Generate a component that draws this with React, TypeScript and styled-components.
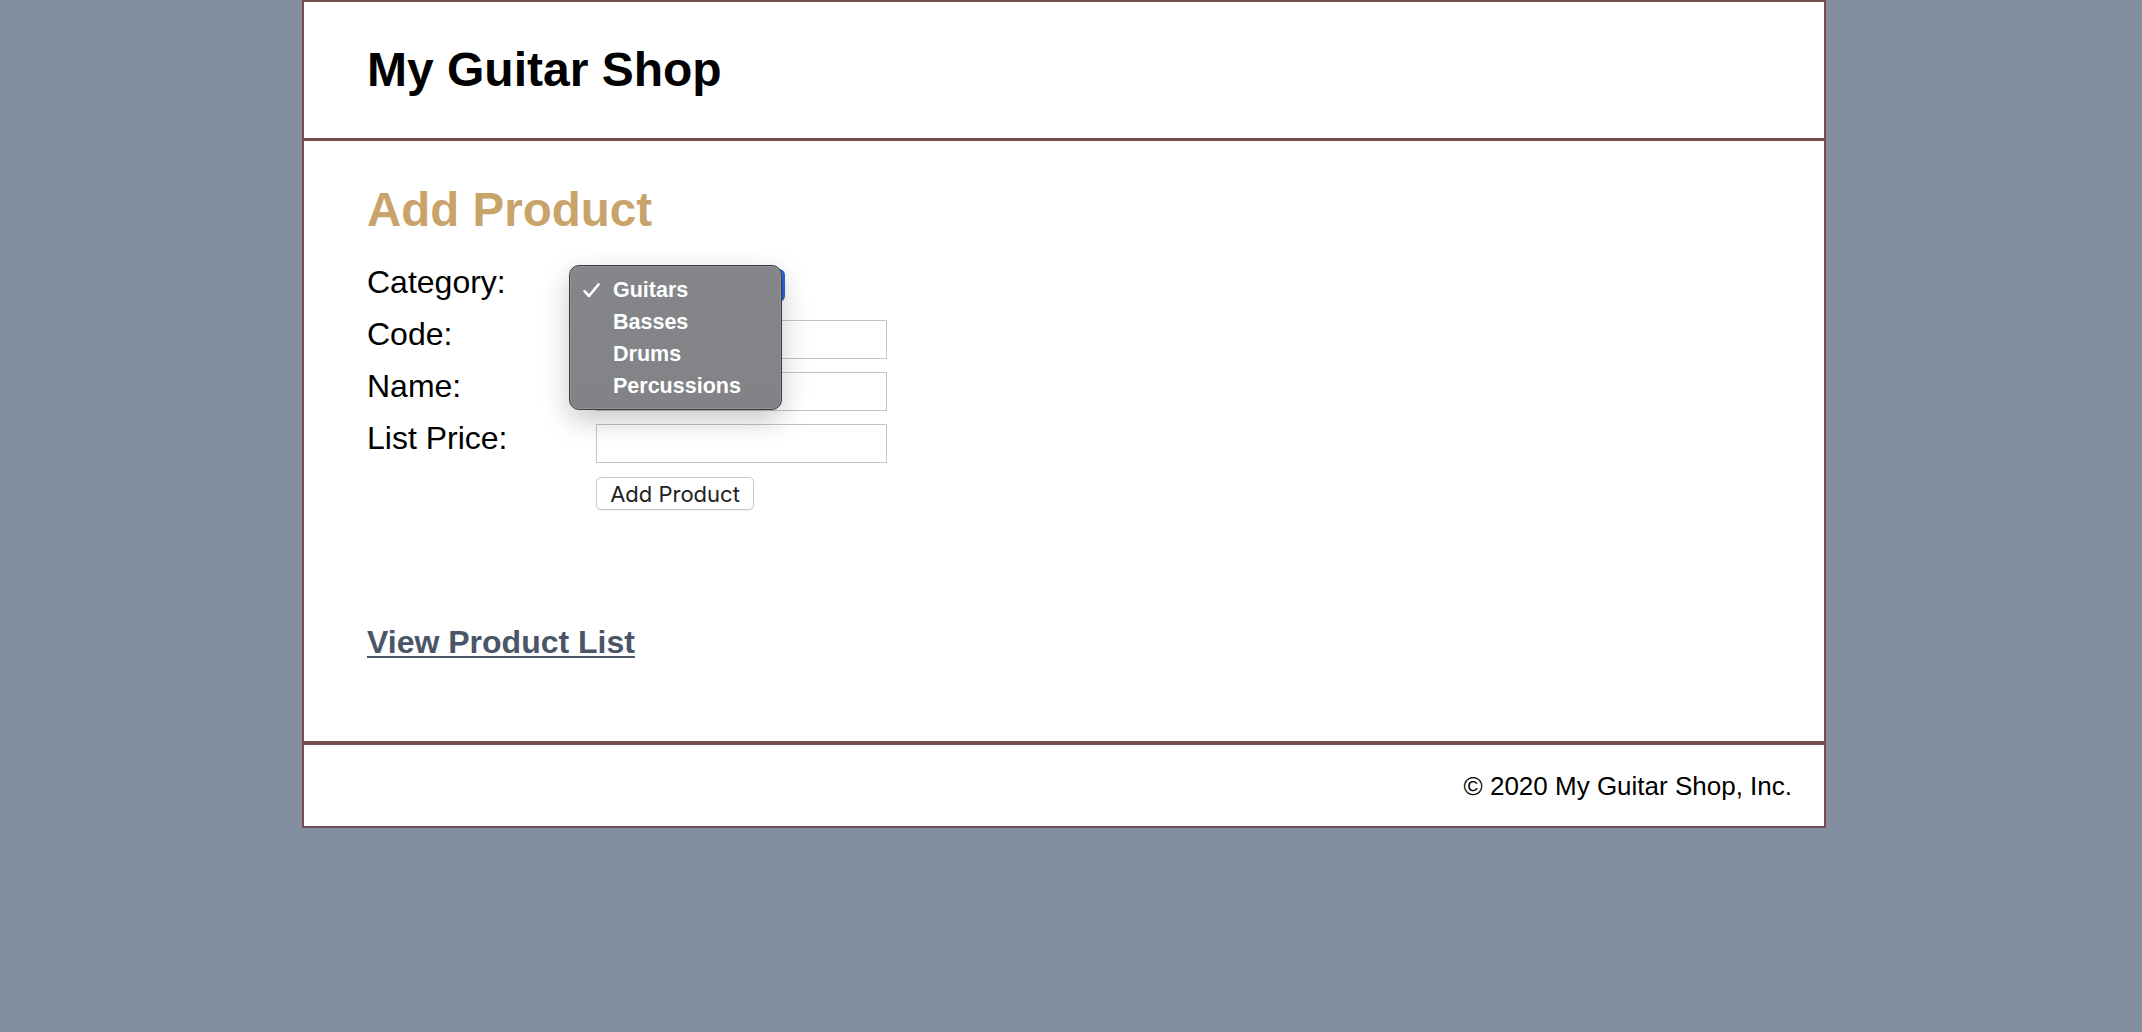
import React from "react";
import styled, { createGlobalStyle } from "styled-components";

const GlobalStyle = createGlobalStyle`
  html, body {
    margin: 0;
    padding: 0;
  }
  body {
    background: #838ea0;
    padding-right: 14px;
    font-family: "Liberation Sans", Arial, sans-serif;
    color: #000;
  }
`;

const Page = styled.div`
  width: 1524px;
  margin: 0 auto;
  box-sizing: border-box;
  background: #fff;
  border: 2px solid #734f4f;
`;

const Header = styled.header`
  padding: 40px 0 41px 63px;
  border-bottom: 3px solid #734f4f;
`;

const Title = styled.h1`
  margin: 0;
  font-size: 48px;
  font-weight: bold;
  line-height: 55px;
`;

const Main = styled.main`
  padding: 41px 0 80px 63px;
`;

const Heading = styled.h2`
  margin: 0 0 27px;
  font-size: 47.5px;
  font-weight: bold;
  line-height: 55px;
  color: #c8a46b;
`;

const Form = styled.form`
  display: flex;
  flex-direction: column;
`;

const Row = styled.div`
  display: flex;
  align-items: flex-start;
  height: 52px;
`;

const Label = styled.label`
  width: 229px;
  font-size: 32px;
  line-height: 37px;
`;

const Field = styled.input`
  box-sizing: border-box;
  width: 291px;
  height: 39px;
  margin-top: 4px;
  border: 1px solid #c4c4c4;
  background: #fff;
  font-size: 20px;
  padding: 0 6px;
  outline: none;
`;

const SelectWrap = styled.div`
  position: relative;
  margin-top: 5px;
`;

const SelectBox = styled.div`
  box-sizing: border-box;
  width: 189px;
  height: 33px;
  border-radius: 6px;
  border: 3px solid #2a62d8;
  background: #fff;
`;

const Popup = styled.div`
  position: absolute;
  left: -27px;
  top: -4px;
  width: 213px;
  height: 145px;
  box-sizing: border-box;
  padding-top: 11px;
  border-radius: 10px;
  border: 1px solid #3c3c3e;
  background: linear-gradient(180deg, #858689 0%, #828386 100%);
  box-shadow: inset 0 0 0 1px rgba(255, 255, 255, 0.12), 0 10px 28px rgba(0, 0, 0, 0.22);
  z-index: 2;
`;

const Option = styled.div`
  position: relative;
  height: 32px;
  padding-left: 43px;
  font-family: "Liberation Sans", Arial, sans-serif;
  font-weight: bold;
  font-size: 21.5px;
  line-height: 26px;
  color: #fff;
`;

const Check = styled.svg`
  position: absolute;
  left: 13px;
  top: 6px;
`;

const ButtonRow = styled.div`
  padding-left: 229px;
  padding-top: 5px;
`;

const Button = styled.button`
  box-sizing: border-box;
  width: 158px;
  height: 33px;
  border: 1px solid #c8c8c8;
  border-radius: 5px;
  background: #fff;
  font-family: Inter, "Liberation Sans", sans-serif;
  font-size: 22px;
  color: #222;
  padding: 0;
  box-shadow: 0 1px 1px rgba(0, 0, 0, 0.08);
`;

const ProductLink = styled.a`
  display: inline-block;
  margin-top: 114px;
  font-size: 32px;
  font-weight: bold;
  line-height: 37px;
  color: #4a5568;
  text-decoration: underline;
  text-underline-offset: 3px;
  text-decoration-thickness: 2px;
`;

const Footer = styled.footer`
  border-top: 4px solid #734f4f;
  padding: 26px 32px 25px 0;
  text-align: right;
  font-size: 26px;
  line-height: 30px;
`;

const categories = ["Guitars", "Basses", "Drums", "Percussions"];

export default function App() {
  return (
    <>
      <GlobalStyle />
      <Page>
        <Header>
          <Title>My Guitar Shop</Title>
        </Header>
        <Main>
          <Heading>Add Product</Heading>
          <Form onSubmit={(e) => e.preventDefault()}>
            <Row>
              <Label>Category:</Label>
              <SelectWrap>
                <SelectBox />
                <Popup>
                  {categories.map((c, i) => (
                    <Option key={c}>
                      {i === 0 && (
                        <Check width="17" height="15" viewBox="0 0 17 15">
                          <path d="M1.5 8.2 L6 13 L15.5 1.5" fill="none" stroke="#fff" strokeWidth="2.6" strokeLinecap="round" strokeLinejoin="round" />
                        </Check>
                      )}
                      {c}
                    </Option>
                  ))}
                </Popup>
              </SelectWrap>
            </Row>
            <Row>
              <Label>Code:</Label>
              <Field type="text" />
            </Row>
            <Row>
              <Label>Name:</Label>
              <Field type="text" />
            </Row>
            <Row>
              <Label>List Price:</Label>
              <Field type="text" />
            </Row>
            <ButtonRow>
              <Button type="submit">Add Product</Button>
            </ButtonRow>
          </Form>
          <ProductLink href="#">View Product List</ProductLink>
        </Main>
        <Footer>&copy; 2020 My Guitar Shop, Inc.</Footer>
      </Page>
    </>
  );
}
